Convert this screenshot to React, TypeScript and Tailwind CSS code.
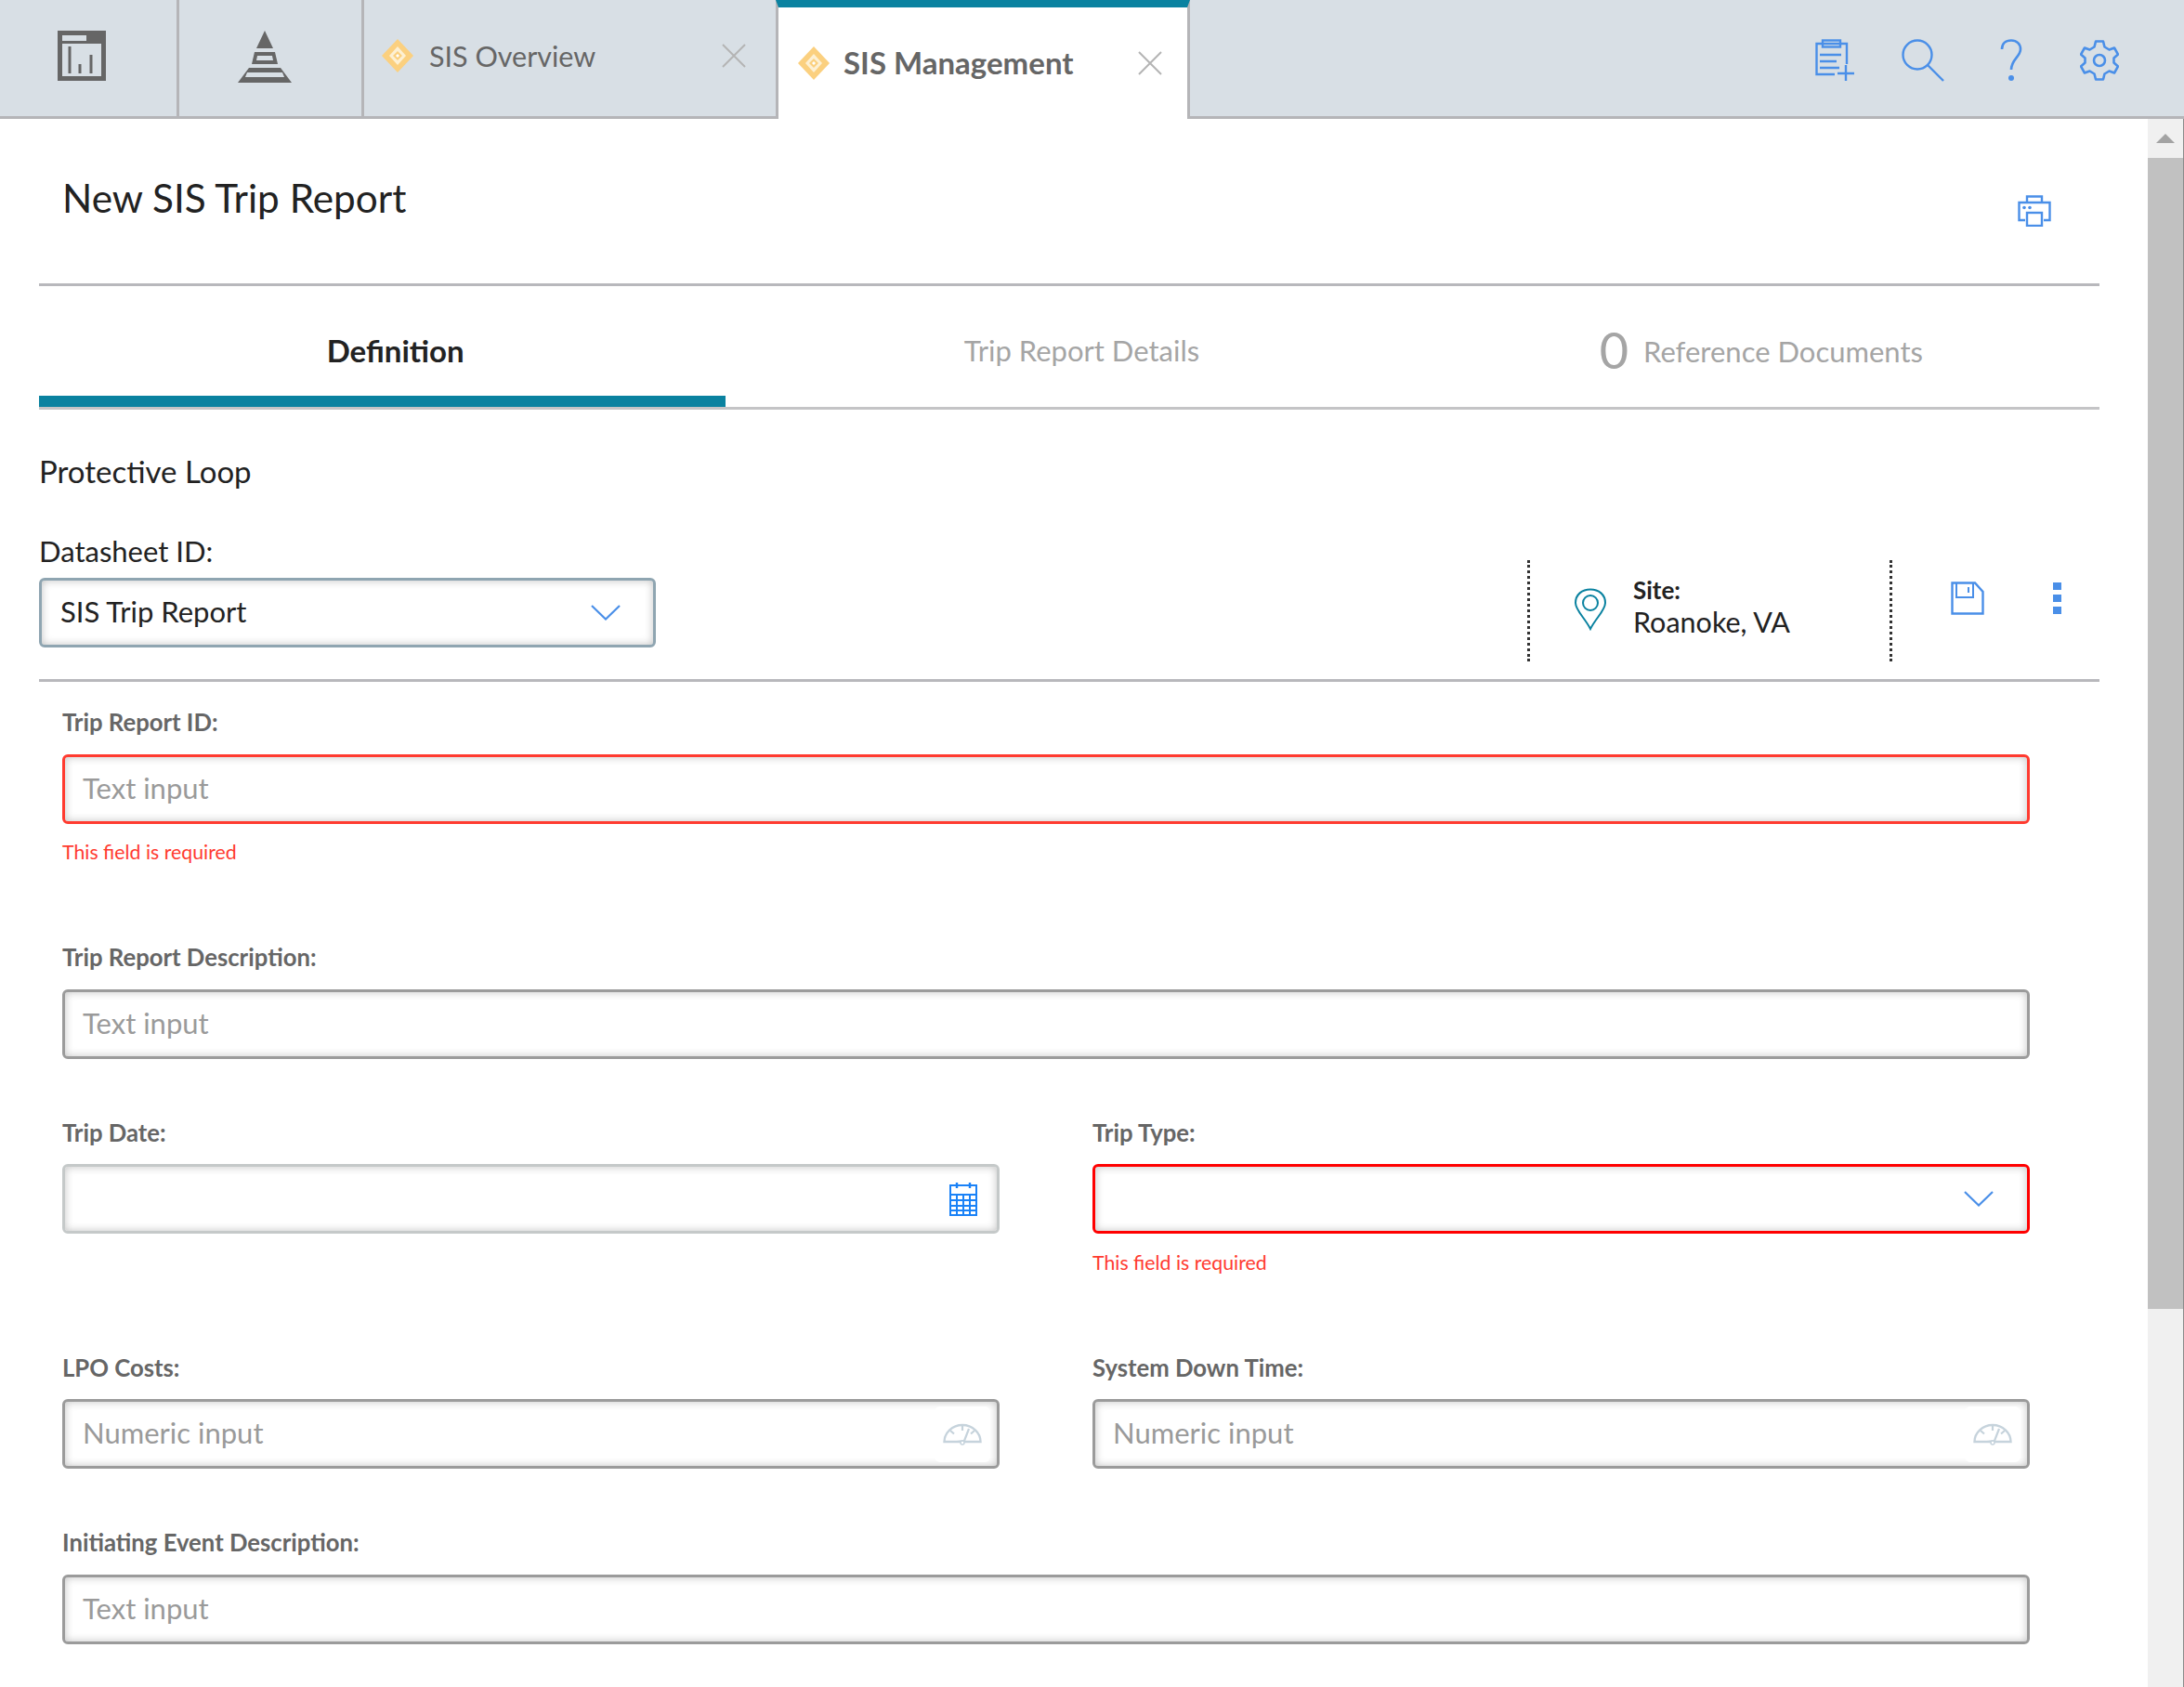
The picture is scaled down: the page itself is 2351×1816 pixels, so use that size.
import React from "react";

const Diamond = () => (
  <svg width="34" height="36" viewBox="0 0 34 36" className="shrink-0">
    <path d="M17 0 L34 18 L17 36 L0 18 Z" fill="#fbd07f" />
    <path d="M17 8 L26 18 L17 28 L8 18 Z" fill="#fdf0d3" />
    <path d="M17 13 L22 18 L17 23 L12 18 Z" fill="#fbd07f" />
    <path d="M17 16 L19 18 L17 20 L15 18 Z" fill="#fff" />
  </svg>
);

const Close = () => (
  <svg width="28" height="28" viewBox="0 0 28 28" className="shrink-0">
    <path d="M2 2 L26 26 M26 2 L2 26" stroke="#b4b4b4" strokeWidth="2" fill="none" />
  </svg>
);

const Chevron = () => (
  <svg width="32" height="17" viewBox="0 0 32 17" className="shrink-0">
    <path d="M1 1 L16 15.5 L31 1" stroke="#4a8fe8" strokeWidth="2.2" fill="none" />
  </svg>
);

const Gauge = () => (
  <div className="w-[60px] h-[60px] rounded-md bg-white flex items-center justify-center shrink-0">
    <svg width="42" height="24" viewBox="0 0 42 24">
      <path d="M1.5 20 A19.5 18 0 0 1 40.5 20 Z" stroke="#c6d3dc" strokeWidth="2.4" fill="none" />
      <path d="M21 2 V8 M8 8 L12 11.5 M34 8 L30 11.5 M28 6 L23 19 L15 20" stroke="#c6d3dc" strokeWidth="2.2" fill="none" />
      <circle cx="21" cy="21" r="2" fill="#fff" stroke="#c6d3dc" strokeWidth="1.5" />
    </svg>
  </div>
);

const Calendar = () => (
  <svg width="30" height="36" viewBox="0 0 30 36" className="shrink-0">
    <rect x="1" y="3" width="28" height="32" fill="none" stroke="#1a82f7" strokeWidth="2" />
    <path d="M1 13 H29 M1 19 H29 M1 25 H29 M1 30 H29 M8 13 V35 M15 13 V35 M22 13 V35" stroke="#1a82f7" strokeWidth="2" fill="none" />
    <path d="M8 0 V6 M22 0 V6" stroke="#1a82f7" strokeWidth="2.4" />
  </svg>
);

const Field = ({ label, border = "border-[#9b9b9b]", placeholder, right, error, lowLabel }: { label: string; border?: string; placeholder?: string; right?: React.ReactNode; error?: boolean; lowLabel?: boolean }) => (
  <div>
    <div className={`leading-[30px] text-[25.7px] font-bold text-[#666666] ${lowLabel ? "h-[31px] pt-[1px] mb-[19px]" : "h-[30px] mb-[20px]"}`}>{label}</div>
    <div className={`h-[75px] rounded-md border-[3px] ${border} bg-white shadow-[inset_0_0_10px_rgba(0,0,0,0.24)] flex items-center justify-between pl-[19px] pr-[16px]`}>
      <span className="text-[31px] text-[#9a9a9a] -mt-[2px]">{placeholder}</span>
      {right}
    </div>
    {error && <div className={`leading-[30px] text-[21.3px] text-[#ff3b30] ${lowLabel ? "h-[30px] mt-[16px]" : "h-[31px] mt-[15px]"}`}>This field is required</div>}
  </div>
);

export default function App() {
  return (
    <div className="w-[2351px] h-[1816px] overflow-hidden bg-white text-[#222222] font-['Lato','Liberation_Sans',sans-serif]">
      {/* Top bar */}
      <div className="h-[128px] bg-[#d8dfe5] border-b-[3px] border-[#b5b5b8] flex items-stretch">
        <div className="w-[193px] border-r-[3px] border-[#b5b5b8] flex items-center justify-center pr-[15px] pb-[6px]">
          <svg width="52" height="54" viewBox="0 0 52 54">
            <rect x="0" y="0" width="52" height="54" fill="#666" />
            <rect x="5" y="14" width="42" height="35" fill="#d8dfe5" />
            <rect x="5" y="5" width="26" height="6" fill="#d8dfe5" />
            <path d="M13 17 V46 M24 36 V46 M36 26 V46" stroke="#666" strokeWidth="3" />
          </svg>
        </div>
        <div className="w-[199px] border-r-[3px] border-[#b5b5b8] flex items-center justify-center pr-[12px] pb-[4px]">
          <svg width="58" height="56" viewBox="0 0 58 56">
            <path d="M29 0 L38 19 H20 Z" fill="#666" />
            <path d="M18 23 H40 L43 36 H15 Z" fill="#666" />
            <path d="M21 27 H37 L38 32 H20 Z" fill="#d8dfe5" />
            <path d="M12 40 H46 L58 56 H0 Z" fill="#666" />
            <path d="M10 45 H48 L50 50 H8 Z" fill="#d8dfe5" />
          </svg>
        </div>
        <div className="w-[443px] flex items-center pl-[19px] pr-[31px] pb-[5px]">
          <Diamond />
          <span className="ml-[17px] mt-[2px] text-[30.5px] text-[#666666]">SIS Overview</span>
          <span className="ml-auto"><Close /></span>
        </div>
        <div className="w-[446px] h-[128px] bg-white border-x-[3px] border-t-[8px] border-x-[#b5b5b8] border-t-[#0a82a0] flex items-center pl-[21px] pr-[26px]">
          <Diamond />
          <span className="ml-[15px] text-[33px] font-bold text-[#666666]">SIS Management</span>
          <span className="ml-auto"><Close /></span>
        </div>
        <div className="flex-1 flex items-center justify-end pr-[70px] pt-[4px] text-[#4a8fe8]">
          <svg width="42" height="46" viewBox="0 0 42 46" fill="none" stroke="currentColor" strokeWidth="2.4">
            <path d="M21 38 H1.5 V5 H34 V27" />
            <rect x="8" y="1.5" width="19" height="7" />
            <path d="M5 17 H28 M5 24 H23 M5 31 H26 M33 28 V45 M24 37 H42" />
          </svg>
          <svg width="46" height="46" viewBox="0 0 46 46" fill="none" stroke="currentColor" strokeWidth="2.4" className="ml-[51px]">
            <circle cx="17" cy="17" r="15.5" />
            <path d="M28 28 L45 45" />
          </svg>
          <svg width="24" height="46" viewBox="0 0 24 46" fill="none" stroke="currentColor" strokeWidth="2.6" className="ml-[60px]">
            <path d="M2 11 C2 5 6 1.5 12 1.5 C18 1.5 22 5.5 22 11 C22 19 12 22 12 33" />
            <circle cx="12" cy="42" r="3" fill="currentColor" stroke="none" />
          </svg>
          <svg width="42" height="44" viewBox="0 0 42 44" fill="none" stroke="currentColor" strokeWidth="2.6" strokeLinejoin="round" className="ml-[62px]">
            <path d="M17 1.5 H25 L26.5 7.5 L31.5 10.5 L37 8.5 L41 15.5 L36.5 19.5 V24.5 L41 28.5 L37 35.5 L31.5 33.5 L26.5 36.5 L25 42.5 H17 L15.5 36.5 L10.5 33.5 L5 35.5 L1 28.5 L5.5 24.5 V19.5 L1 15.5 L5 8.5 L10.5 10.5 L15.5 7.5 Z" />
            <circle cx="21" cy="22" r="6" />
          </svg>
        </div>
      </div>

      <div className="flex h-[1688px]">
        <div className="w-[2312px] shrink-0 pl-[42px] pr-[52px]">
          {/* Title */}
          <div className="h-[177px] flex justify-between pl-[25px] border-b-[3px] border-[#b8b8bc] box-content">
            <h1 className="mt-[60px] h-[50px] leading-[50px] text-[42.3px] text-[#222222]">New SIS Trip Report</h1>
            <svg width="36" height="34" viewBox="0 0 36 34" fill="none" stroke="#4a8fe8" strokeWidth="2.4" className="mt-[82px] mr-[52px]">
              <path d="M8 27 H1.5 V8 H34.5 V27 H28" />
              <path d="M10 8 V1.5 H26 V8" />
              <rect x="10" y="19" width="16" height="14" />
              <circle cx="7" cy="13.5" r="1.8" fill="#4a8fe8" stroke="none" />
              <circle cx="13" cy="13.5" r="1.8" fill="#4a8fe8" stroke="none" />
            </svg>
          </div>

          {/* Tabs */}
          <div className="grid grid-cols-3 h-[133px] border-b-[3px] border-[#c4c4c6]">
            <div className="border-b-[12px] border-[#0a82a0] flex items-center justify-center pt-[22px] pl-[28px]">
              <span className="text-[33px] font-bold text-[#222222]">Definition</span>
            </div>
            <div className="flex items-center justify-center pt-[8px] pl-[27px]">
              <span className="text-[31px] text-[#a5a5a5]">Trip Report Details</span>
            </div>
            <div className="flex items-center pt-[8px] pl-[201px] gap-[16px]">
              <span className="text-[54px] leading-[60px] text-[#a5a5a5]">0</span>
              <span className="text-[31px] text-[#a5a5a5] mt-[2px]">Reference Documents</span>
            </div>
          </div>

          <div className="mt-[46px] h-[40px] leading-[40px] text-[33px] text-[#222222]">Protective Loop</div>

          {/* Datasheet row */}
          <div className="mt-[47px] h-[157px] flex justify-between border-b-[3px] border-[#b8b8bc] box-content -mb-[3px]">
            <div>
              <div className="h-[40px] leading-[40px] text-[31px] text-[#222222] -mt-[1px] mb-[9px]">Datasheet ID:</div>
              <div className="w-[664px] h-[75px] rounded-md border-[3px] border-[#8fa5b1] shadow-[inset_0_0_10px_rgba(0,0,0,0.24)] flex items-center justify-between pl-[20px] pr-[35px]">
                <span className="text-[31px] text-[#222222] -mt-[2px]">SIS Trip Report</span>
                <Chevron />
              </div>
            </div>
            <div className="w-[616px] h-[109px] mt-[29px] flex">
              <div className="w-[390px] border-l-[3px] border-dotted border-[#333333] pl-[47px] flex">
                <svg width="36" height="46" viewBox="0 0 36 46" fill="none" stroke="#0a82a0" strokeWidth="2" className="mt-[30px] shrink-0">
                  <path d="M18 44 C12 32 2 24 2 16 C2 7 9 1.5 18 1.5 C27 1.5 34 7 34 16 C34 24 24 32 18 44 Z" />
                  <circle cx="18" cy="16" r="8" />
                </svg>
                <div className="ml-[28px] mt-[17px]">
                  <div className="h-[30px] leading-[30px] text-[26px] font-bold text-[#222222]">Site:</div>
                  <div className="h-[30px] leading-[30px] mt-[4px] text-[30.5px] text-[#222222]">Roanoke, VA</div>
                </div>
              </div>
              <div className="flex-1 border-l-[3px] border-dotted border-[#333333] pl-[63px] pt-[23px] flex items-start">
                <svg width="36" height="36" viewBox="0 0 36 36" fill="none" stroke="#4a8fe8" strokeWidth="2.4">
                  <path d="M1.5 1.5 H26 L34.5 11 V34.5 H1.5 Z" />
                  <path d="M6 1.5 V17 H24 V1.5" strokeWidth="2" />
                  <path d="M19 6 V12" strokeWidth="2" />
                </svg>
                <div className="ml-[74px] flex flex-col gap-[5px] mt-[1px]">
                  <div className="w-[9px] h-[8px] bg-[#4a8fe8]" />
                  <div className="w-[9px] h-[8px] bg-[#4a8fe8]" />
                  <div className="w-[9px] h-[8px] bg-[#4a8fe8]" />
                </div>
              </div>
            </div>
          </div>

          {/* Form */}
          <div className="w-[2143px] pl-[25px] pt-[31px]">
            <Field label="Trip Report ID:" border="border-[#ff3b30]" placeholder="Text input" error />
            <div className="mt-[82px]">
              <Field label="Trip Report Description:" placeholder="Text input" />
            </div>
            <div className="mt-[63px] grid grid-cols-2 gap-x-[100px] items-start">
              <Field label="Trip Date:" lowLabel border="border-[#c5c9c9]" right={<span className="mr-[5px]"><Calendar /></span>} />
              <Field label="Trip Type:" lowLabel border="border-[#ff0000]" right={<span className="mr-[20px]"><Chevron /></span>} error />
            </div>
            <div className="mt-[82px] grid grid-cols-2 gap-x-[100px] items-start">
              <Field label="LPO Costs:" lowLabel placeholder="Numeric input" right={<span className="-mr-[9px] block"><Gauge /></span>} />
              <Field label="System Down Time:" lowLabel placeholder="Numeric input" right={<span className="-mr-[9px] block"><Gauge /></span>} />
            </div>
            <div className="mt-[64px]">
              <Field label="Initiating Event Description:" placeholder="Text input" />
            </div>
          </div>
        </div>

        {/* Scrollbar */}
        <div className="w-[39px] h-[1688px] bg-[#f0f0f0] border-r border-[#8a8a8a] flex flex-col">
          <div className="h-[42px] flex items-center justify-center">
            <div className="w-0 h-0 border-x-[10px] border-x-transparent border-b-[10px] border-b-[#a3a3a3]" />
          </div>
          <div className="h-[1239px] bg-[#c1c1c1]" />
        </div>
      </div>
    </div>
  );
}
